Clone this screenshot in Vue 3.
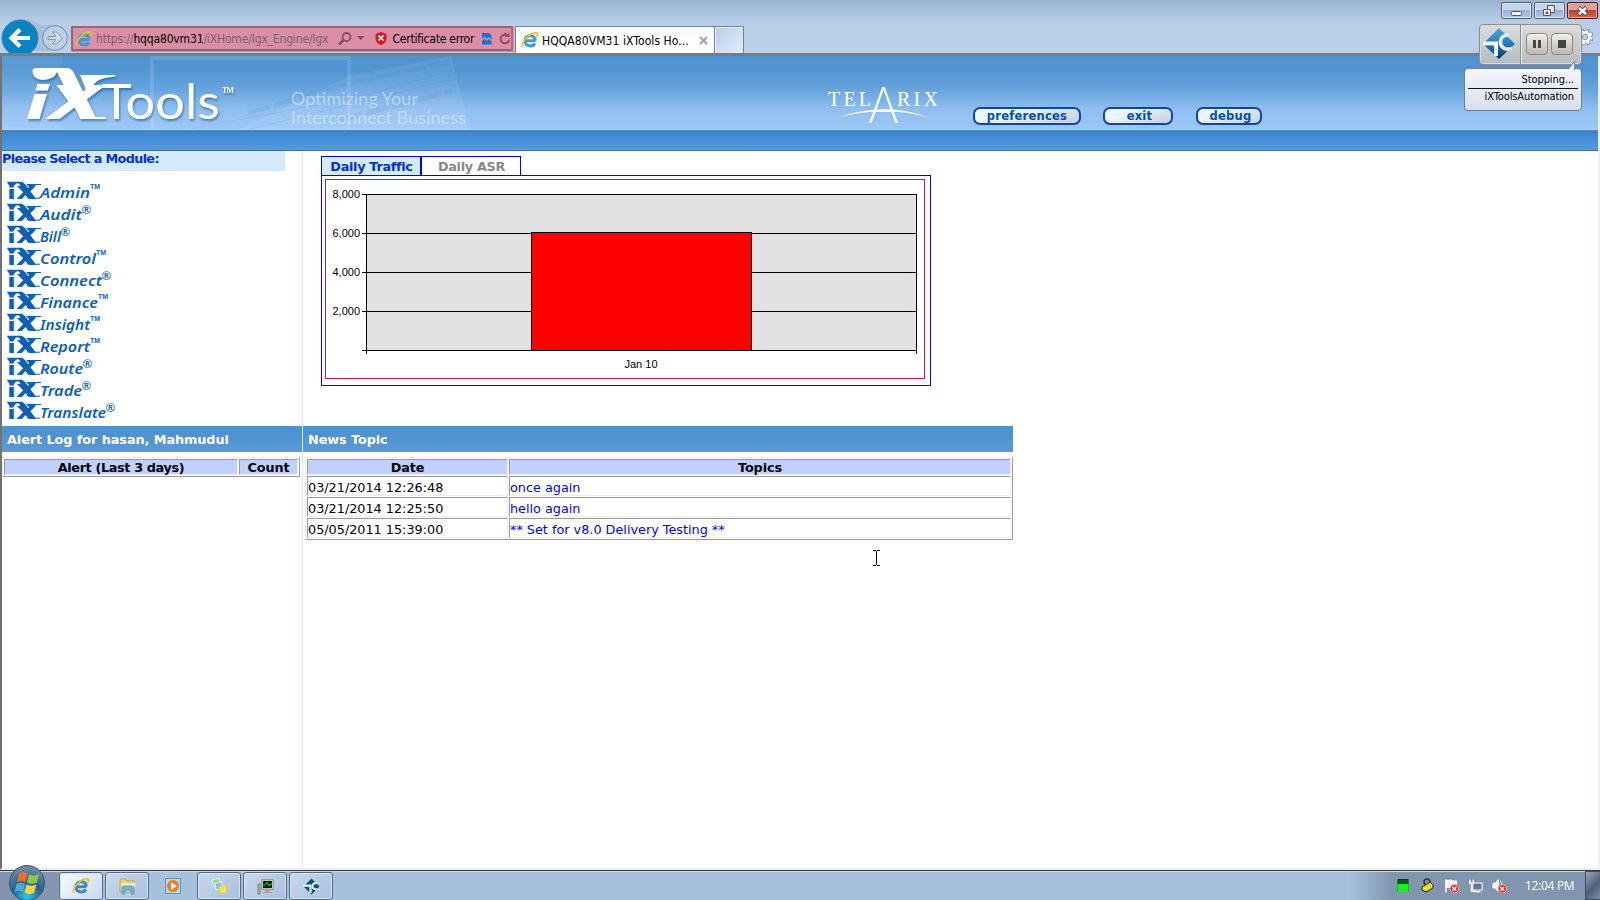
<script setup>
const modules = [
  { name: 'Admin', end: 90, mark: '™' },
  { name: 'Audit', end: 82, mark: '®' },
  { name: 'Bill', end: 61, mark: '®' },
  { name: 'Control', end: 96, mark: '™' },
  { name: 'Connect', end: 102, mark: '®' },
  { name: 'Finance', end: 98, mark: '™' },
  { name: 'Insight', end: 90, mark: '™' },
  { name: 'Report', end: 90, mark: '™' },
  { name: 'Route', end: 83, mark: '®' },
  { name: 'Trade', end: 82, mark: '®' },
  { name: 'Translate', end: 106, mark: '®' },
]
const ticks = [
  { label: '8,000', y: 15 },
  { label: '6,000', y: 54 },
  { label: '4,000', y: 93 },
  { label: '2,000', y: 132 },
  { label: '', y: 171 },
]
const news = [
  { date: '03/21/2014 12:26:48', topic: 'once again' },
  { date: '03/21/2014 12:25:50', topic: 'hello again' },
  { date: '05/05/2011 15:39:00', topic: '** Set for v8.0 Delivery Testing **' },
]
</script>

<template>
  <div class="screen">
    <div class="chrome">
      <svg class="nav-arrows" width="71" height="53" viewBox="0 0 71 53">
        <path d="M20 19C34 19 36 25 46 25L55 25L55 51L20 51Z" fill="#a3b9d2" opacity=".75" />
        <circle cx="20" cy="38" r="18" fill="#0784c4" stroke="#4b7da3" />
        <path d="M30 38H12M20 29.5L11.5 38L20 46.500" fill="none" stroke="#fff" stroke-width="4.200" />
        <circle cx="55" cy="38" r="12.300" fill="#bdd0e7" stroke="#8397b0" stroke-width="1.200" />
        <path d="M48 36.500H56L52.500 32H56.500L62.500 38L56.500 44H52.500L56 39.500H48Z" fill="#d3e0f0" stroke="#8094ae" />
      </svg>
      <div class="address">
        <svg width="18" height="18" viewBox="0 0 18 18">
          <path d="M14.500 9.700H5.500M14.300 9.500C14.300 3 4 3 4 9.700C4 16 12 16 13.800 12.500" fill="none" stroke="#3c9bd8" stroke-width="3" />
          <path d="M2 16C-1 12 9 1 16 2C17.500 3 16 5 15 6" fill="none" stroke="#f1bd20" stroke-width="1.700" />
        </svg>
        <span class="url">https://<b>hqqa80vm31</b>/iXHome/Igx_Engine/Igx</span>
        <svg class="glass" width="14" height="14" viewBox="0 0 14 14"><circle cx="8.500" cy="5" r="4" fill="none" stroke="#85505f" stroke-width="1.800" /><path d="M5.500 8L1 12.500" stroke="#85505f" stroke-width="2.500" /></svg>
        <svg class="caret" width="8" height="5" viewBox="0 0 8 5"><path d="M0 0H7.500L3.800 4.200Z" fill="#85505f" /></svg>
        <svg class="shield" width="12" height="13" viewBox="0 0 12 13"><path d="M6 0L11.500 2V7Q11 11 6 13Q1 11 .5 7V2Z" fill="#d01c23" /><path d="M3.500 3.500L8.500 8.500M8.500 3.500L3.500 8.500" stroke="#fff" stroke-width="1.700" /></svg>
        <span class="cert">Certificate error</span>
        <svg class="broken" width="10" height="13" viewBox="0 0 10 13"><path d="M0 1H7L9.500 3.500V12.500H0Z" fill="#1c6fd0" /><path d="M0 8L2.500 5.500L4.500 8L6.500 6L9.500 8.500" fill="none" stroke="#dc8ea6" stroke-width="1.500" /></svg>
        <svg class="reload" width="12" height="13" viewBox="0 0 12 13"><path d="M10.200 7.500A4.300 4.300 0 1 1 7.500 3" fill="none" stroke="#85505f" stroke-width="1.900" /><path d="M5.500 0L6 5L11 4.800L10 .5L9 2.500Z" fill="#85505f" /></svg>
      </div>
      <div class="tab">
        <svg width="18" height="18" viewBox="0 0 18 18">
          <path d="M14.500 9.700H5.500M14.300 9.500C14.300 3 4 3 4 9.700C4 16 12 16 13.800 12.500" fill="none" stroke="#3c9bd8" stroke-width="3" />
          <path d="M2 16C-1 12 9 1 16 2C17.500 3 16 5 15 6" fill="none" stroke="#f1bd20" stroke-width="1.700" />
        </svg>
        <span class="tab-title">HQQA80VM31 iXTools Ho...</span>
        <svg class="tab-x" width="9" height="9" viewBox="0 0 9 9"><path d="M1 1L8 8M8 1L1 8" stroke="#a5a5a5" stroke-width="2.200" /></svg>
      </div>
      <div class="new-tab"></div>
      <div class="window-buttons">
        <span class="wb"><svg width="29" height="16" viewBox="0 0 29 16"><rect x="9.500" y="8.500" width="10" height="4" rx="1" fill="#f4f4f4" stroke="#535666" /></svg></span>
        <span class="wb"><svg width="29" height="16" viewBox="0 0 29 16"><path d="M12.500 2.500H19.500V9.500H12.500Z" fill="#f4f4f4" stroke="#535666" /><path d="M8.500 6.500H15.500V12.500H8.500Z" fill="#f4f4f4" stroke="#535666" /><path d="M11 9H13V10.500H11Z" fill="#87a4c5" stroke="#535666" /></svg></span>
        <span class="wb close"><svg width="29" height="16" viewBox="0 0 29 16"><path d="M10.500 4.500L18.500 11.500M18.500 4.500L10.500 11.500" stroke="#535666" stroke-width="4.400" /><path d="M11 5L18 11M18 5L11 11" stroke="#fff" stroke-width="2.400" /></svg></span>
      </div>
    </div>

    <div class="page">
      <header class="banner">
        <svg class="brand" width="480" height="73" viewBox="2 56 480 73">
          <rect x="2" y="56" width="60" height="73" fill="#fff" opacity=".06" />
          <path d="M152 129V58H349V129" fill="none" stroke="#fff" stroke-width="4" opacity=".12" />
          <path d="M240 129L350 76L451 56L470 129Z" fill="#fff" opacity=".08" />
          <g fill="none" stroke="#2b74b8" opacity=".1" stroke-width="5" stroke-dasharray="22 5"><path d="M248 113L350 83L450 62" /><path d="M340 120L452 91" /></g>
          <path d="M190 129L350 99L455 70M250 129L458 78" fill="none" stroke="#2b74b8" opacity=".1" />
          <g class="logo-shadow" fill="#fff">
            <text x="25" y="118.500" class="ix-big" textLength="78" lengthAdjust="spacingAndGlyphs">iX</text>
            <path d="M32.500 70Q33 68 36 68H67Q71 68 73.500 72L96 118H80L57 72Q54 80 42 80Q32 79 32.500 70Z" />
            <path d="M80 75H116L114 77Q96 77 91 89L86 90Z" />
            <path d="M80 117H106V119H80Z" />
            <text x="101" y="118.500" class="tools" textLength="119" lengthAdjust="spacingAndGlyphs">Tools</text>
            <text x="222" y="93" class="tm" textLength="12">TM</text>
          </g>
          <g class="slogan"><text x="291" y="105" textLength="127" lengthAdjust="spacingAndGlyphs">Optimizing Your</text><text x="291" y="124" textLength="175" lengthAdjust="spacingAndGlyphs">Interconnect Business</text></g>
        </svg>
        <svg class="telarix" width="116" height="46" viewBox="825 82 116 46" fill="#fff">
          <text x="828" y="106" textLength="43" class="caps">TEL</text>
          <text x="868.500" y="122.500" textLength="30" lengthAdjust="spacingAndGlyphs" class="big-a">A</text>
          <text x="897" y="106" textLength="41" class="caps">RIX</text>
          <path d="M838 117.500Q885 101 929 117.500Q885 105 838 117.500Z" />
        </svg>
        <nav class="actions">
          <button class="pill pref">preferences</button>
          <button class="pill exit">exit</button>
          <button class="pill debug">debug</button>
        </nav>
      </header>
      <div class="band"></div>

      <div class="body">
        <aside class="left">
          <div class="modules">
            <h2 class="select">Please Select a Module:</h2>
            <svg v-for="m in modules" :key="m.name" class="module" width="140" height="22" viewBox="2 0 140 22">
              <text x="7" y="17.500" class="ix-small" textLength="29" lengthAdjust="spacingAndGlyphs">iX</text>
              <path d="M7 .7H22L25 3L36 17.700H28L19 2.500H16Q15 5 11.500 5Q8 4.500 7 .7Z" />
              <path d="M26 3H41V4H37Q34.500 4 33 8L31 8Z" />
              <path d="M30 16.700H40V17.700H30Z" />
              <text x="40" y="16.700" class="word" :textLength="m.end - 40" lengthAdjust="spacingAndGlyphs">{{ m.name }}</text>
              <text v-if="m.mark === '™'" :x="m.end" y="7.500" class="mark-tm" textLength="10">TM</text>
              <text v-else :x="m.end" y="10.500" class="mark-r">®</text>
            </svg>
          </div>
          <h2 class="section">Alert Log for hasan, Mahmudul</h2>
          <div class="grid alerts">
            <div class="cell head">Alert (Last 3 days)</div>
            <div class="cell head">Count</div>
          </div>
        </aside>
        <main class="right">
          <div class="dashboard">
            <div class="tabs">
              <div class="chart-tab on">Daily Traffic</div>
              <div class="chart-tab">Daily ASR</div>
            </div>
            <div class="panel">
              <svg width="600" height="200" viewBox="0 0 600 200" shape-rendering="crispEdges">
                <rect x=".5" y=".5" width="599" height="199" fill="#fff" stroke="#dc143c" />
                <rect x="41.500" y="15.500" width="550" height="156" fill="#e2e2e2" stroke="#000" />
                <g v-for="t in ticks" :key="t.y">
                  <path :d="`M37 ${t.y + 0.5}H591`" stroke="#000" />
                  <text x="35" :y="t.y + 4" text-anchor="end" class="axis">{{ t.label }}</text>
                </g>
                <path d="M41.500 171V175M591.500 171V175" stroke="#000" />
                <rect x="206.500" y="53.500" width="220" height="118" fill="#f00" stroke="#000" />
                <text x="316" y="189" text-anchor="middle" class="axis">Jan 10</text>
              </svg>
            </div>
          </div>
          <h2 class="section news-title">News Topic</h2>
          <div class="grid news">
            <div class="cell head">Date</div>
            <div class="cell head">Topics</div>
            <template v-for="n in news" :key="n.date">
              <div class="cell">{{ n.date }}</div>
              <div class="cell link">{{ n.topic }}</div>
            </template>
          </div>
        </main>
      </div>
    </div>

    <footer class="taskbar">
      <svg class="start" width="59" height="35" viewBox="0 865 59 35">
        <defs><radialGradient id="orb" cx="50%" cy="90%" r="85%"><stop offset="0" stop-color="#27c9f3" /><stop offset=".5" stop-color="#22648f" /><stop offset="1" stop-color="#6d8ba5" /></radialGradient></defs>
        <circle cx="27" cy="883" r="17.500" fill="url(#orb)" stroke="#35516f" />
        <path d="M19 873.500Q23 871 27.500 873.500L25.500 882Q21 880 17 882Z" fill="#ed6b2c" /><path d="M29 874.500Q34 877 39 874L37 882.500Q32 885 27 882.500Z" fill="#94c63d" />
        <path d="M16.500 884Q21 881.500 25 884L23 892Q19 889.500 14.500 892Z" fill="#53a5e0" /><path d="M26.500 884.500Q31 887 36.500 884.500L34 893Q29 895.500 24.500 892.500Z" fill="#fcd047" />
      </svg>
      <div class="task active">
        <svg width="18" height="18" viewBox="0 0 18 18"><path d="M14.500 9.700H5.500M14.300 9.500C14.300 3 4 3 4 9.700C4 16 12 16 13.800 12.500" fill="none" stroke="#3289cf" stroke-width="3" /><path d="M2 16C-1 12 9 1 16 2C17.500 3 16 5 15 6" fill="none" stroke="#f1bd20" stroke-width="1.700" /></svg>
      </div>
      <div class="task">
        <svg width="17" height="17" viewBox="0 0 17 17"><path d="M1 3L2 1H7L8 3H15V14H1Z" fill="#e8d27e" stroke="#c0a653" /><path d="M2 5H16V12H2Z" fill="#f8eaa8" /><path d="M3 16V10Q3 8 5 8H13Q15 8 15 10V16H12V12H6V16Z" fill="#6fb4df" stroke="#4e8fbd" stroke-width=".7" /></svg>
      </div>
      <div class="task plain">
        <svg width="17" height="17" viewBox="0 0 17 17"><path d="M.5.5H15.500V15.500H.5Z" fill="#b4daf2" stroke="#5794be" /><circle cx="8" cy="8" r="6" fill="#f07c12" /><path d="M6 4L12 8L6 12Z" fill="#fff" /></svg>
      </div>
      <div class="task">
        <svg width="17" height="17" viewBox="0 0 17 17"><path d="M1 2L8 0L10 7L3 9Z" fill="#9cd98c" stroke="#dff5dd" /><path d="M4 5L11 4L12 11L5 12Z" fill="#84c2e9" stroke="#e1f2fb" /><path d="M8 9L15 7L16 14L9 16Z" fill="#f6df6b" stroke="#f0d23a" /></svg>
      </div>
      <div class="task">
        <svg width="17" height="17" viewBox="0 0 17 17"><path d="M1 6H3V16H1Z" fill="#bbb" stroke="#555" stroke-width=".6" /><path d="M4.500 1.500H16.500V11.500H4.500Z" fill="#c2bfb3" stroke="#a09e96" /><path d="M6 3H15V10H6Z" fill="#0b2113" /><path d="M6 7H8L10 4L12 8L13 6H15" fill="none" stroke="#16d53b" /><path d="M8 12H13V14H15V15H6V14H8Z" fill="#a8a498" /></svg>
      </div>
      <div class="task">
        <svg width="17" height="17" viewBox="0 0 34 34"><path d="M17 1L33 17L17 33L1 17Z" fill="#095384" /><path d="M0 15H15V30" fill="none" stroke="#e9f3fb" stroke-width="4.500" /><path d="M29 10Q19 9 19 17Q20 24 29 22" fill="none" stroke="#e9f3fb" stroke-width="4" /></svg>
      </div>
      <div class="tray">
        <svg width="12" height="13" viewBox="0 0 12 13"><path d="M0 0H11V13H0Z" fill="#083c0b" /><path d="M0 5H11V13H0Z" fill="#0cf61b" /><path d="M1 1.500H11M1 3.500H11" stroke="#159523" stroke-dasharray="1 1" /></svg>
        <svg width="13" height="15" viewBox="0 0 13 15"><circle cx="6" cy="4" r="3" fill="none" stroke="#333" stroke-width="1.500" /><path d="M1 9L9 4L12 7V10L5 14L1 12Z" fill="#e7dc00" stroke="#222" /><path d="M2 9.500L5 11L11 7.500" fill="none" stroke="#fff66b" /></svg>
        <svg width="16" height="16" viewBox="0 0 16 16"><path d="M2 1V15M3 2H8V3H13V10H8V9H3Z" fill="#e8edf3" stroke="#fff" stroke-width="1.500" /><circle cx="11" cy="11" r="4.500" fill="#dc2c2d" stroke="#f7b3ae" /><path d="M9 9L13 13M13 9L9 13" stroke="#fff" stroke-width="1.500" /></svg>
        <svg width="17" height="16" viewBox="0 0 17 16"><path d="M5.500 4.500H16V12.500H5.500Z" fill="#66788e" stroke="#fff" stroke-width="1.200" /><path d="M8 14.500H14" stroke="#fff" stroke-width="1.500" /><path d="M2 1V5H6V1M4 5V14H8" fill="none" stroke="#fff" stroke-width="1.700" /></svg>
        <svg width="16" height="16" viewBox="0 0 16 16"><path d="M1 5H3L7 1V14L3 10H1Z" fill="#eef2f5" stroke="#fff" /><path d="M9 3Q12 6 11 10" stroke="#fff" fill="none" /><circle cx="11" cy="11" r="4.500" fill="#dc2c2d" stroke="#f7b3ae" /><path d="M9 9L13 13M13 9L9 13" stroke="#fff" stroke-width="1.500" /></svg>
        <span class="clock">12:04 PM</span>
        <span class="peek"></span>
      </div>
    </footer>

    <svg class="gear" width="16" height="18" viewBox="-8 -9 16 18"><circle r="4.500" fill="none" stroke="#74839a" stroke-width="4.500" /><circle r="6.500" fill="none" stroke="#74839a" stroke-width="4" stroke-dasharray="3.100 2" /><circle r="4.500" fill="none" stroke="#fff" stroke-width="3" /><circle r="6.300" fill="none" stroke="#fff" stroke-width="2.500" stroke-dasharray="2.400 2.540" /></svg>
    <div class="recorder">
      <div class="rec-logo">
        <svg width="34" height="34" viewBox="0 0 34 34">
          <defs><linearGradient id="dia" x1="0" y1="0" x2="0" y2="1"><stop offset="0" stop-color="#4fa3da" /><stop offset=".55" stop-color="#1f79b9" /><stop offset="1" stop-color="#052e4e" /></linearGradient></defs>
          <path d="M17 1L33 17L17 32L1 17Z" fill="url(#dia)" /><path d="M1 14.500H16V29H12V18.500Q8 18 1 18.500Z" fill="#f3f8fc" /><path d="M27 8Q18 8 18.500 16Q20 24 30 21.500" fill="none" stroke="#e5eff7" stroke-width="3.600" />
        </svg>
      </div>
      <div class="rec-btn"><svg width="20" height="20" viewBox="0 0 20 20"><path d="M6 6H9V14H6ZM11 6H14V14H11Z" fill="#454545" /></svg></div>
      <div class="rec-btn"><svg width="20" height="20" viewBox="0 0 20 20"><path d="M6 6H14V14H6Z" fill="#454545" /></svg></div>
    </div>
    <div class="balloon">
      <svg class="tail" width="9" height="9" viewBox="0 0 9 9"><path d="M0 8.500L6.500 .5V9" fill="#f3f6fd" stroke="#75808f" /></svg>
      <div class="line first">Stopping...</div>
      <div class="line">iXToolsAutomation</div>
    </div>
    <svg class="ibeam" width="8" height="17" viewBox="0 0 8 17" shape-rendering="crispEdges"><path d="M0 .5H3M4 .5H7M3.500 1V15M0 15.500H3M4 15.500H7" stroke="#000" /></svg>
  </div>
</template>

<style>
html, body { overflow: hidden; background: #fff; }
</style>
<style scoped>
* { box-sizing: border-box; }
.screen { position: relative; width: 1600px; height: 900px; display: flex; flex-direction: column; overflow: hidden; background: #fff; font-family: "DejaVu Sans", Verdana, sans-serif; font-size: 12.8px; color: #000; }
svg { display: block; flex: none; }
h2 { margin: 0; font-size: 12.8px; white-space: nowrap; }
.chrome { height: 56px; flex: none; display: flex; align-items: flex-start; background: linear-gradient(#9bb4d0 0, #aac2dd 12px, #b9cfe9 24px, #b9d0ea 53px); border-bottom: 3px solid #777c80; font-family: "DejaVu Sans Condensed", "DejaVu Sans", Tahoma, sans-serif; }
.address { width: 442px; height: 25px; margin-top: 26px; display: flex; align-items: center; background: #dc8ea6; border: 2px solid #c2687c; border-top-color: #97667d; border-left-color: #97667d; border-bottom-color: #8d6478; padding-left: 2px; box-shadow: 1px 1px 0 #ed8295; }
.url { margin-left: 3px; width: 239px; white-space: nowrap; color: #805f6f; font-size: 12px; letter-spacing: -.16px; }
.url b { font-weight: 400; color: #000; }
.glass { margin-left: 1px; }
.glass { margin-left: 4px; }
.caret { margin-left: 5px; }
.shield { margin-left: 10px; }
.cert { margin-left: 6px; width: 83px; font-size: 12px; white-space: nowrap; letter-spacing: -.23px; }
.broken { margin-left: 7px; }
.reload { margin-left: 7px; }
.tab { margin: 26px 0 0 2px; width: 200px; height: 27px; display: flex; align-items: center; padding-left: 5px; border: 1px solid #718297; border-bottom: 0; background: linear-gradient(#f4f7fb, #fff 60%); }
.tab-title { margin: 1px 0 0 3px; width: 148px; white-space: nowrap; font-size: 12px; letter-spacing: .08px; }
.tab-x { margin-left: 9px; }
.new-tab { margin-top: 26px; width: 29px; height: 27px; border: 1px solid #718297; border-left: 0; border-bottom: 0; background: linear-gradient(135deg, #b7cfe8, #e3edf8); box-shadow: inset 1px 1px #e9f1fa; }
.window-buttons { margin: 2px 2px 0 auto; display: flex; gap: 2px; }
.wb { width: 31px; height: 17px; border: 1px solid #53657d; border-radius: 2px; background: linear-gradient(#c4d5e8 48%, #96b2d0 50%, #b1cae3); box-shadow: inset 0 0 0 1px #d8e4f1; }
.wb.close { border-color: #511b1c; background: linear-gradient(#e0a294 48%, #bd4029 50%, #d06b50); box-shadow: inset 0 0 0 1px #e3a999; }

.page { flex: 1; min-height: 0; display: flex; flex-direction: column; border-left: 2px solid #737373; border-right: 2px solid #edf1f5; border-bottom: 2px solid #eee; }
.banner { height: 74px; flex: none; display: flex; background: linear-gradient(#4f92d0 0, #5194d1 14px, #68a5df 34px, #8fbef0 53px, #9dc8f5 73px); border-bottom: 1px solid #b5d9fb; }
.logo-shadow { filter: drop-shadow(1px 2px 1px #245d94aa); }
.ix-big { font: italic bold 46px "DejaVu Sans", sans-serif; }
.tools { font: 400 48px Lato, sans-serif; }
.tm { font: bold 8px "Liberation Serif", serif; }
.slogan { font: 400 16.500px Lato, "Open Sans", sans-serif; fill: #d8ebff; opacity: .6; }
.telarix { margin: 26px 0 0 343px; overflow: visible; }
.caps { font: 400 20px "Liberation Serif", serif; }
.big-a { font: 300 52px Lato, sans-serif; }
.actions { display: flex; margin: 51px 0 0 32px; }
.pill { height: 18px; padding: 0; border: 2px solid #1244a8; border-radius: 7px; background: linear-gradient(160deg, #eef6fd 30%, #c3d0df); color: #004fb1; font: bold 11.500px "DejaVu Sans", sans-serif; line-height: 13px; letter-spacing: .25px; }
.pref { width: 108px; }
.exit { width: 70px; margin-left: 22px; padding-left: 3px; }
.debug { width: 66px; margin-left: 23px; padding-left: 3px; }
.band { height: 21px; flex: none; background: linear-gradient(#3d84c9, #438fd9 50%, #579bdd); border-bottom: 1px solid #3a70af; }
.body { flex: 1; min-height: 0; display: grid; grid-template-columns: 301px 1fr; }
.left { border-right: 1px solid #d5e8fc; }
.modules { height: 275px; }
.select { width: 283px; height: 20px; margin-bottom: 10px; background: #d5eaff; color: #0033cc; line-height: 15px; letter-spacing: -.66px; }
.module { fill: #0c60b5; overflow: visible; }
.ix-small { font: bold 18px "DejaVu Sans", sans-serif; }
.word { font: italic 600 15px "Noto Sans", "Open Sans", sans-serif; }
.mark-tm { font: bold 7px "Liberation Sans", sans-serif; }
.mark-r { font: bold 12px "Liberation Sans", sans-serif; }
.section { height: 26px; padding-left: 5px; background: linear-gradient(#4f92d0 40%, #5b9ad6); color: #fff; line-height: 27px; letter-spacing: -.06px; }
.news-title { width: 710px; }
.grid { display: grid; gap: 1px; padding: 1px; margin-top: 5px; border: 1px solid #9a9a9a; border-top-color: #eee; border-left-color: #eee; }
.cell { border: 1px solid #eee; border-top-color: #9a9a9a; border-left-color: #9a9a9a; white-space: nowrap; line-height: 21px; }
.head { background: #c0d0ff; text-align: center; font-weight: bold; line-height: 15px; letter-spacing: -.36px; }
.alerts { width: 298px; grid-template-columns: 234px 1fr; grid-template-rows: 16px; }
.news { width: 708px; margin-left: 2px; grid-template-columns: 201px 1fr; grid-template-rows: 16px 20px 20px 20px; }
.alerts .head:last-child, .news .head { letter-spacing: -.1px; }
.link { color: #0000ff; }
.dashboard { height: 275px; padding: 5px 0 0 18px; }
.tabs { display: flex; }
.chart-tab { width: 100px; height: 19px; border: 1px solid #0000ff; border-bottom: 0; text-align: center; color: #888; font-weight: bold; line-height: 19px; letter-spacing: -.3px; padding-left: 1px; }
.chart-tab.on { background: #d5eaff; color: #0033cc; }
.panel { width: 610px; height: 211px; border: 1px solid #0000ff; padding: 3px; }
.axis { font: 11px "Liberation Sans", Arial, sans-serif; }

.taskbar { height: 30px; flex: none; display: flex; align-items: flex-start; border-top: 1px solid #303b49; box-shadow: inset 0 1px #c6d8ea; background: linear-gradient(90deg, #8293ac 0, #8496b0 58px, #a6c1de 62px, #a6c1de 1350px, #8195ae 1392px); }
.start { margin-top: -6px; }
.task { width: 44px; height: 28px; margin: 1px 2px 0 0; display: flex; align-items: center; justify-content: center; border: 1px solid #526a87; border-radius: 3px; background: linear-gradient(135deg, #c7d9ec, #aabfdc); box-shadow: inset 0 0 0 1px #d7e4f1; }
.task.active { background: linear-gradient(135deg, #fbfcfe, #c6d7ec); }
.task.plain { border-color: transparent; background: none; box-shadow: none; }
.tray { margin-left: auto; height: 29px; display: flex; align-items: center; gap: 9px; }
.tray svg { width: 15px; }
.clock { margin-left: 9px; margin-right: 2px; width: 49px; color: #fff; font: 12px "Open Sans", "Noto Sans", sans-serif; white-space: nowrap; letter-spacing: -.3px; }
.peek { width: 15px; height: 29px; border: 1px solid #3e4c5e; border-right: 0; background: linear-gradient(135deg, #9aa9bc, #4d617c 55%, #7c8da5); }

.gear { position: absolute; left: 1577px; top: 28px; }
.recorder { position: absolute; left: 1479px; top: 24px; width: 103px; height: 41px; display: flex; align-items: center; border: 1px solid #8b8d8e; border-radius: 4px; background: linear-gradient(#dadcdd, #b6bcc1); box-shadow: inset 0 0 0 1px #d8dadb; }
.rec-logo { width: 41px; height: 39px; padding: 2px 0 0 2px; border-right: 1px solid #8b8d8e; box-shadow: 1px 0 #eee; }
.rec-btn { width: 22px; height: 22px; margin: -1px 0 0 3px; border: 1px solid #8c8779; border-radius: 4px; background: linear-gradient(#f1f0ec, #bdb8aa); }
.rec-logo + .rec-btn { margin-left: 5px; }
.balloon { position: absolute; left: 1464px; top: 68px; width: 118px; height: 43px; padding: 0 3px; border: 1px solid #75808f; border-radius: 4px; background: linear-gradient(#f3f6fd, #d9dfef); font: 11px "DejaVu Sans Condensed", "DejaVu Sans", sans-serif; }
.tail { position: absolute; right: 4px; top: -8px; }
.line { height: 16px; line-height: 16px; padding-right: 4px; text-align: right; white-space: nowrap; letter-spacing: -.1px; }
.line.first { height: 20px; line-height: 21px; border-bottom: 1px solid #10131a; }
.ibeam { position: absolute; left: 873px; top: 550px; }
</style>
